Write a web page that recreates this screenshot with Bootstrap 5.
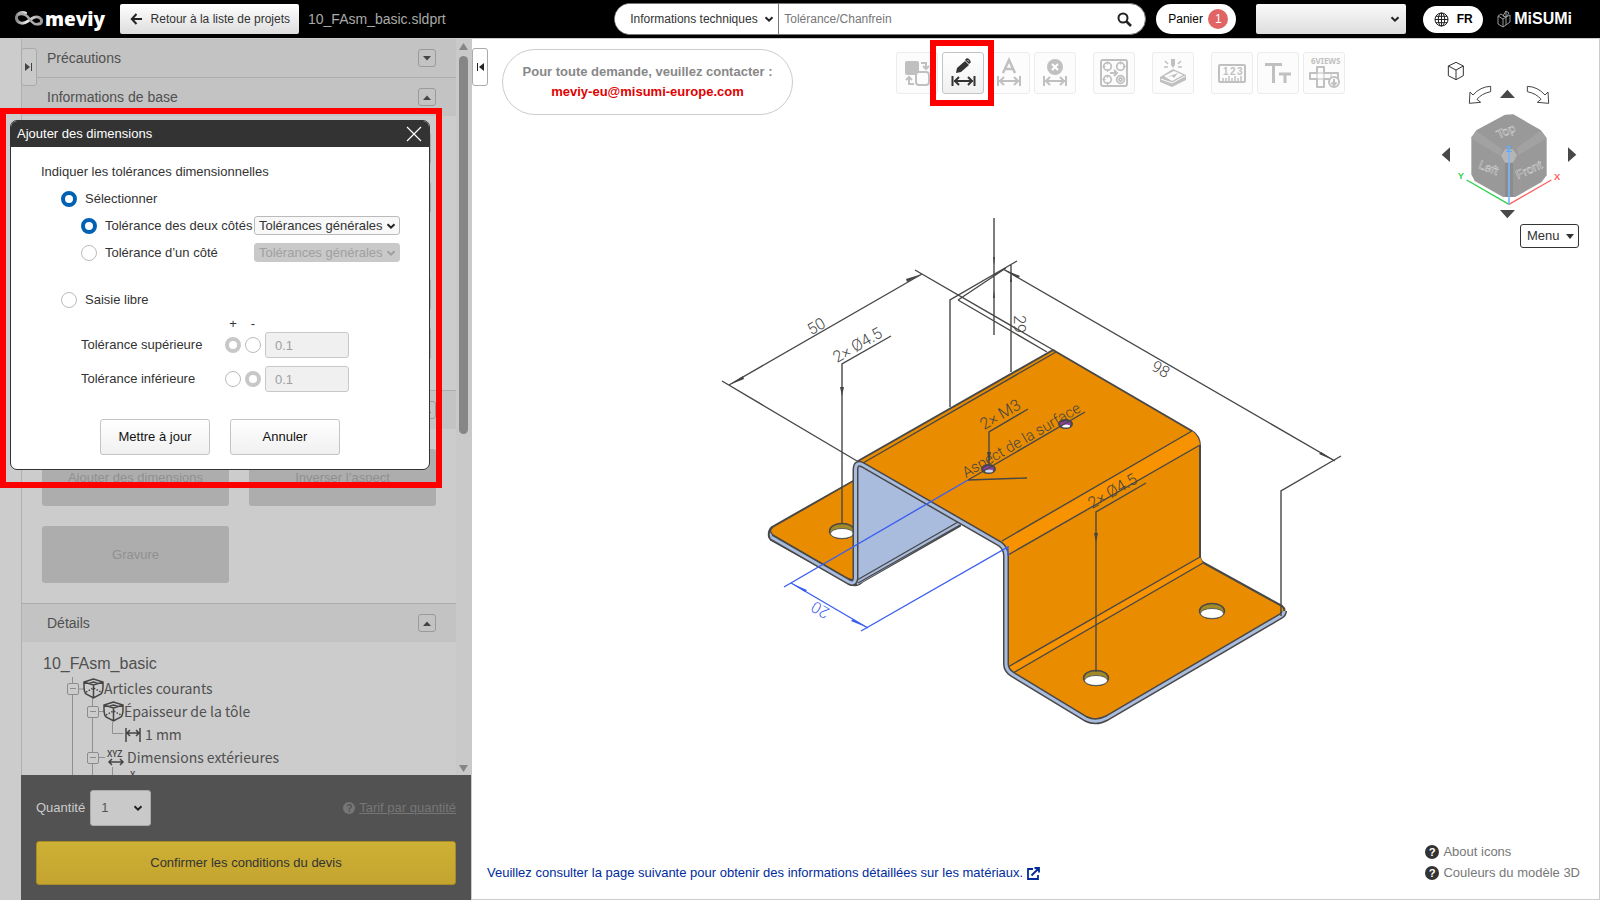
<!DOCTYPE html>
<html lang="fr">
<head>
<meta charset="utf-8">
<meta name="viewport" content="width=device-width, initial-scale=1">
<title>meviy – 10_FAsm_basic.sldprt</title>
<link href="https://cdn.jsdelivr.net/npm/bootstrap@5.3.0/dist/css/bootstrap.min.css" rel="stylesheet">
<style>
:root{--chev:url("data:image/svg+xml,%3Csvg xmlns='http://www.w3.org/2000/svg' viewBox='0 0 10 10'%3E%3Cpath d='M1.5 3.2 5 6.6 8.5 3.2' fill='none' stroke='%23222' stroke-width='2'/%3E%3C/svg%3E");
--chev-off:url("data:image/svg+xml,%3Csvg xmlns='http://www.w3.org/2000/svg' viewBox='0 0 10 10'%3E%3Cpath d='M1.5 3.2 5 6.6 8.5 3.2' fill='none' stroke='%23a0a0a0' stroke-width='2'/%3E%3C/svg%3E")}
body{font-family:"Liberation Sans",Arial,sans-serif;font-size:13px;line-height:20px;color:#333}
svg{display:block;flex:none}
.form-select,.form-control{font-size:13px;line-height:16px;min-height:0;border-radius:3px;color:#333}
.form-select{background-image:var(--chev);background-size:10px 10px}
.topbar{height:39px;background:#000;border-bottom:1px solid #ccc;padding:0 28px 0 15px;font-size:12px}
.brand{font:800 19px/26px "Open Sans",sans-serif;color:#fff;text-decoration:none;width:90px;gap:1px}
.grad{background-color:#eee;background-image:linear-gradient(#fff,#ddd)}
.back{height:30px;width:179px;font-size:12px;border-radius:2px;padding:0 9px 0 10px;color:#333;border:0;margin-left:15px}
.fname{font-size:14px;color:#aaa;margin-left:9px}
.search{width:532px;height:32px;border-radius:16px;background:#fff;border:1px solid #777;overflow:hidden}
.search .form-select{width:164px;height:30px;border:0;border-right:1px solid #777;border-radius:0;background-color:#fff;font-size:12px;padding:0 20px 0 15px;background-position:right 4px center}
.search .form-control{border:0;font-size:12px;padding:0 5px;height:30px;box-shadow:none}
.search .form-control::placeholder{color:#777}
.cart{height:30px;width:80px;border-radius:15px;background:#fff;border:0;color:#000;font-size:12px;margin-left:10px}
.cart .count{width:20px;height:20px;border-radius:50%;background:#e06464;color:#fff}
.acct{width:150px;height:30px;border:0;border-radius:2px;background-image:var(--chev),linear-gradient(#fafafa,#ddd);background-size:10px 10px,100% 100%;background-position:right 6px center,0 0;background-repeat:no-repeat;margin-left:20px}
.lang{width:60px;height:27px;border-radius:14px;background:#fff;border:0;font-weight:700;color:#000;margin-left:17px}
.misumi{font:700 16px/24px "Liberation Sans",sans-serif;color:#fff;text-decoration:none;margin-left:14px;gap:3px}
.side{width:472px;background:#ccc;padding-left:21px}
.scroller{border-left:1px solid #b0b0b0}
.sec-head{height:39px;border-top:1px solid #acacac;background:#c3c3c3;padding:0 20px 0 25px;font-size:14px;color:#505050}
.sec-head:first-child{height:38px;border-top:0}
.sec-head button{width:18px;height:18px;border:1px solid #9a9a9a;border-radius:3px;background:transparent}
.info-body{height:274px;padding:16px 25px}
.info-body .form-control{height:33px;background:#c8c8c8;border-color:#aaa}
.acts{padding:20px;gap:20px;display:grid;grid-template-columns:1fr 1fr}
.acts .btn{height:57px;background:#adadad;border:0;border-radius:3px;color:#909090;font-size:13px;opacity:1}
.tree{padding:11px 20px 0 21px;color:#505050;font:14px/23px "Noto Sans CJK JP",sans-serif}
.tree h2{font:16px/22px "Liberation Sans",sans-serif;margin:0 0 2px}
.tree li{height:23px}
.tree .guides{left:40px;top:35px}
.lv1{padding-left:24px}.lv2{padding-left:44px}.lv3{padding-left:82px}
.tog{width:12px;height:12px;border:1px solid #8c8c8c;border-radius:2px;background:#ccc;color:#8c8c8c;padding:0}
.tog::after{content:"";display:block;width:6px;height:1px;background:#8c8c8c;margin:auto}
.bar{width:16px;background:#c9c9c9;padding:4px 4px 3px 3px}
.thumb{height:378px;width:9px;border-radius:5px;background:#868686;margin-top:6px}
.order{background:#525252;padding:15px 15px;margin-right:1px;height:125px}
.order .form-select{width:61px;height:36px;background-color:#c9c9c9;border-color:#aaa;color:#555;padding:0 10px;margin-left:5px;background-position:right 7px center}
.order .tarif{color:#767676}
.cta{height:44px;background:linear-gradient(#cdb035,#c4a42f);border:1px solid #a88c25;border-radius:3px;color:#333;font-size:13px;margin-top:15px}
.handle{border:1px solid #aaa;border-radius:3px;width:16px;height:38px;background:#c9c9c9;top:9px}
.dlg{left:10px;top:81px;width:420px;height:350px;background:#fff;border:1px solid #333;border-radius:7px;overflow:hidden;z-index:3}
.dlg header{height:26px;background:#333;color:#fff;padding:0 7px 0 6px}
.dlg-main{padding:11px 28px 15px 30px}
.rowline{height:27px}
.dlg input[type=radio]{appearance:none;width:16px;height:16px;border:1px solid #bbb;border-radius:50%;margin:0;background:#fff;flex:none}
.dlg input[type=radio]:checked{border:4px solid #0060b4}
.dlg input[type=radio]:disabled:checked{border-color:#c8c8c8}
.ind1{padding-left:20px;gap:8px}.ind2{padding-left:40px;gap:8px}
.dlg .form-select{width:146px;height:19px;padding:0 12px 0 4px;border-color:#bbb;background-position:right 3px center;background-color:#f8f8f8;flex:none}
.dlg .form-select:disabled{background-color:#c9c9c9;background-image:var(--chev-off);border-color:#c9c9c9;color:#a0a0a0}
.dlg .pos{width:141px}
.free{padding-left:40px}
.free label{width:140px}
.free .form-control{width:84px;height:26px;padding:0 9px;background:#f0f0f0;border-color:#c8c8c8;color:#a0a0a0}
.signs{padding:3px 0 0 144px}
.pm{width:16px;text-align:center;line-height:16px}
.dlg-foot{gap:20px;margin-top:27px;padding-right:2px}
.dlg .btn,.tbtn{background:linear-gradient(#fff,#f0f0f0);border:1px solid #c4c4c4;border-radius:3px}
.dlg .btn{width:110px;height:36px;font-size:13px;padding:0;color:#111}
.frame{border:6px solid red;pointer-events:none;z-index:4}
.frame-dlg{left:0;top:69px;width:442px;height:380px}
.frame-btn{inset:-12px -10px -12px -12px}
.viewer{border-right:1px solid #ccc;border-bottom:1px solid #ccc;background:#fff}
.contact{width:291px;height:66px;border:1px solid #ccc;border-radius:33px;font-weight:700;color:#888;margin-left:30px}
.contact a{color:#e00000;text-decoration:none}
.tools{gap:17px;margin-left:103px;padding-top:3px}
.tbtn{width:42px;height:42px;padding:0;color:#333}
.tbtn:disabled{border-color:#ececec;color:#c0c0c0;background:#fcfcfc}
.nav3d{padding:7px 20px 0 0}
.nav3d svg{margin-right:1px}
.menu3d{width:59px;height:24px;border:1px solid #333;border-radius:3px;background:#fff;color:#333;padding:0 4px 0 6px}
.caret{border:4px solid transparent;border-top:5px solid currentColor;border-bottom:0}
.mat{color:#002c9c;text-decoration:none}
.helps a{color:#777;text-decoration:none}
.ln{fill:none;stroke:#484848;stroke-width:1.4}
</style>
</head>
<body class="vh-100 d-flex flex-column overflow-hidden">
<header class="topbar d-flex align-items-center flex-shrink-0">
  <a href="#" class="brand d-flex align-items-center"><svg width="29" height="16" viewBox="0 0 30 16"><defs><linearGradient id="g"><stop offset="0" stop-color="#888"/><stop offset=".4" stop-color="#eee"/><stop offset="1" stop-color="#999"/></linearGradient></defs><path d="M12 2.500C6-.5 1 3 1.500 7.500S8 14 13 10.500S21 4.500 25 6.500S28 14 23 13" fill="none" stroke="url(#g)" stroke-width="3"/><path d="M3 3.500Q10 1 15 8T24 13" fill="none" stroke="#aaa" stroke-width="2.400"/></svg>meviy</a>
  <button class="back btn grad d-flex align-items-center justify-content-between"><svg width="13" height="12" viewBox="0 0 13 12"><path d="M6.500 1 1.800 6l4.700 5M2 6h10" fill="none" stroke="#222" stroke-width="2"/></svg>Retour à la liste de projets</button>
  <span class="fname">10_FAsm_basic.sldprt</span>
  <form class="search d-flex align-items-center ms-auto">
    <select class="form-select" aria-label="Type de recherche"><option>Informations techniques</option></select>
    <input class="form-control" type="search" placeholder="Tolérance/Chanfrein" aria-label="Recherche">
    <button type="button" class="btn p-0 me-2 pe-1" aria-label="Rechercher"><svg width="15" height="15" viewBox="0 0 15 15"><circle cx="6" cy="6" r="4.500" fill="none" stroke="#222" stroke-width="2"/><path d="m9.500 9.500 4.500 4.500" stroke="#222" stroke-width="2.600"/></svg></button>
  </form>
  <button class="cart d-flex align-items-center justify-content-between px-2"><span class="ps-1">Panier</span><span class="count">1</span></button>
  <select class="form-select acct" aria-label="Compte"><option></option></select>
  <button class="lang d-flex align-items-center justify-content-center gap-2"><svg width="15" height="15" viewBox="0 0 15 15" fill="none" stroke="#222"><circle cx="7.500" cy="7.500" r="6.500"/><ellipse cx="7.500" cy="7.500" rx="3.200" ry="6.500"/><path d="M7.500 1v13M1 7.500h13M2 4.300h11M2 10.700h11"/></svg>FR</button>
  <a href="#" class="misumi d-flex align-items-center"><svg width="14" height="18" viewBox="0 0 14 18" fill="none" stroke="#aaa" stroke-width=".9"><path d="m1 6 5 3v8l-5-3zM6 9l3-2v8l-3 2M6 6l3-5 3 2-3 4zM9 7l4-2v7l-4 3M9 1v6M1 6l3-2 3 2"/></svg>MiSUMi</a>
</header>

<div class="d-flex flex-grow-1 position-relative" style="min-height:0">
  <aside class="side d-flex flex-column flex-shrink-0 position-relative">
    <div class="scroller d-flex flex-grow-1 overflow-hidden">
      <div class="flex-grow-1">
        <div class="sec-head d-flex align-items-center justify-content-between">Précautions<button class="d-flex align-items-center justify-content-center p-0" aria-label="Ouvrir"><svg width="8" height="5"><path d="M0 0h8L4 4.500z" fill="#444"/></svg></button></div>
        <div class="sec-head d-flex align-items-center justify-content-between">Informations de base<button class="d-flex align-items-center justify-content-center p-0" aria-label="Fermer"><svg width="8" height="5"><path d="M0 5h8L4 .5z" fill="#444"/></svg></button></div>
        <div class="info-body d-flex flex-column gap-3">
          <input class="form-control" disabled aria-label="Matière"><input class="form-control" disabled aria-label="Traitement"><input class="form-control mt-5" disabled aria-label="Épaisseur"><input class="form-control" disabled aria-label="Note">
        </div>
        <div class="sec-head d-flex align-items-center justify-content-end"><button class="d-flex align-items-center justify-content-center p-0" aria-label="Fermer"><svg width="8" height="5"><path d="M0 5h8L4 .5z" fill="#444"/></svg></button></div>
        <div class="acts"><button class="btn" disabled>Ajouter des dimensions</button><button class="btn" disabled>Inverser l’aspect</button><button class="btn" disabled>Gravure</button></div>
        <div class="sec-head d-flex align-items-center justify-content-between">Détails<button class="d-flex align-items-center justify-content-center p-0" aria-label="Fermer"><svg width="8" height="5"><path d="M0 5h8L4 .5z" fill="#444"/></svg></button></div>
        <div class="tree position-relative">
          <svg class="guides position-absolute" width="70" height="100" fill="none" stroke="#909090"><path d="M10.500 0v100M30.500 20v80M50.500 45v11.500h11M50.500 90v10M16 12h7M36 34.500h7M36 80.500h7"/></svg>
          <h2>10_FAsm_basic</h2>
          <ul class="list-unstyled m-0 position-relative">
            <li class="d-flex align-items-center lv1"><button class="tog" aria-label="Réduire"></button><svg class="ms-1" width="21" height="21" viewBox="0 0 21 21" fill="none" stroke="#444" stroke-width="1.500"><path d="M10.500 1 1 4v4q0 6 2 8l7.500 4 7.500-4q2-2 2-8V4zM1 4l9.500 3L20 4M10.500 7v13M6 5.500 10.500 4 15 5.500"/><path d="m3 14 7.500-4 7.500 4" stroke-dasharray="1.500 1.500"/></svg>Articles courants</li>
            <li class="d-flex align-items-center lv2"><button class="tog" aria-label="Réduire"></button><svg class="ms-1" width="21" height="21" viewBox="0 0 21 21" fill="none" stroke="#444" stroke-width="1.500"><path d="M10.500 1 1 4v4q0 6 2 8l7.500 4 7.500-4q2-2 2-8V4zM1 4l9.500 3L20 4M10.500 7v13M6 5.500 10.500 4 15 5.500"/><path d="m3 14 7.500-4 7.500 4" stroke-dasharray="1.500 1.500"/></svg>Épaisseur de la tôle</li>
            <li class="d-flex align-items-center lv3"><svg class="me-1" width="16" height="14" viewBox="0 0 16 14" fill="none" stroke="#444" stroke-width="1.500"><path d="M1 0v14M15 0v14M2 5h12M5 2 2 5l3 3M11 2l3 3-3 3"/></svg>1 mm</li>
            <li class="d-flex align-items-center lv2"><button class="tog" aria-label="Réduire"></button><svg class="ms-2" width="20" height="22" viewBox="0 0 20 22"><text x="0" y="10" font-size="9" font-weight="500" fill="#444" font-family="Noto Sans CJK JP">XYZ</text><path d="M1.500 15h15M5 12l-3 3 3 3M13 12l3 3-3 3" fill="none" stroke="#444" stroke-width="1.500"/></svg>Dimensions extérieures</li>
            <li class="lv3"><svg class="ms-1" width="12" height="16"><text x="1" y="9" font-size="9" font-weight="500" fill="#444" font-family="Noto Sans CJK JP">X</text></svg></li>
          </ul>
        </div>
      </div>
      <div class="bar d-flex flex-column flex-shrink-0"><svg width="9" height="7"><path d="M0 7h9L4.500 0z" fill="#868686"/></svg><div class="thumb flex-shrink-0"></div><svg class="mt-auto" width="9" height="7"><path d="M0 0h9L4.500 7z" fill="#868686"/></svg></div>
    </div>
    <div class="order flex-shrink-0">
      <div class="d-flex align-items-center"><label for="qty" style="color:#ccc">Quantité</label><select id="qty" class="form-select"><option>1</option></select>
        <a href="#" class="tarif ms-auto d-flex align-items-center gap-1"><svg width="12" height="12" viewBox="0 0 13 13"><circle cx="6.500" cy="6.500" r="6.500" fill="#767676"/><text x="3.500" y="10.500" font-size="11" font-weight="700" fill="#525252">?</text></svg>Tarif par quantité</a></div>
      <button class="btn cta w-100">Confirmer les conditions du devis</button>
    </div>
    <button class="handle position-absolute d-flex align-items-center justify-content-center p-0" style="left:21px" aria-label="Replier"><svg width="8" height="8"><path d="m0 0 5 4-5 4z" fill="#444"/><path d="M6.500 0v8" stroke="#444"/></svg></button>
  </aside>

  <section class="dlg position-absolute" role="dialog" aria-label="Ajouter des dimensions">
    <header class="d-flex align-items-center justify-content-between">Ajouter des dimensions<button class="btn p-0 border-0 w-auto h-auto" style="background:none" aria-label="Fermer"><svg width="16" height="16"><path d="m1 1 14 14M15 1 1 15" stroke="#fff" stroke-width="1.200"/></svg></button></header>
    <div class="dlg-main">
      <div class="rowline d-flex align-items-center">Indiquer les tolérances dimensionnelles</div>
      <div class="rowline d-flex align-items-center ind1"><input type="radio" name="mode" id="m1" checked><label for="m1">Sélectionner</label></div>
      <div class="rowline d-flex align-items-center ind2"><input type="radio" name="tol" id="t1" checked><label for="t1" class="text-nowrap pos">Tolérance des deux côtés</label><select class="form-select" aria-label="Deux côtés"><option>Tolérances générales</option></select></div>
      <div class="rowline d-flex align-items-center ind2"><input type="radio" name="tol" id="t2"><label for="t2" class="text-nowrap pos">Tolérance d’un côté</label><select class="form-select" disabled aria-label="Un côté"><option>Tolérances générales</option></select></div>
      <div class="rowline d-flex align-items-center ind1" style="margin-top:20px"><input type="radio" name="mode" id="m2"><label for="m2">Saisie libre</label></div>
      <div class="free">
        <div class="signs d-flex gap-1"><span class="pm">+</span><span class="pm">-</span></div>
        <div class="d-flex align-items-center gap-1 mb-2"><label for="up" class="flex-shrink-0">Tolérance supérieure</label><input type="radio" name="s" disabled checked aria-label="plus"><input type="radio" name="s" disabled aria-label="moins"><input id="up" class="form-control" value="0.1" disabled></div>
        <div class="d-flex align-items-center gap-1"><label for="lo" class="flex-shrink-0">Tolérance inférieure</label><input type="radio" name="i" disabled aria-label="plus"><input type="radio" name="i" disabled checked aria-label="moins"><input id="lo" class="form-control" value="0.1" disabled></div>
      </div>
      <div class="dlg-foot d-flex justify-content-center"><button class="btn">Mettre à jour</button><button class="btn">Annuler</button></div>
    </div>
  </section>
  <div class="frame frame-dlg position-absolute"></div>

  <main class="viewer flex-grow-1 position-relative d-flex flex-column">
    <svg class="position-absolute w-100 h-100" viewBox="472 39 1127 860" font-family="Roboto,sans-serif" font-weight="300" font-size="16" fill="#444">
      <g stroke-linejoin="round">
        <!-- left flange -->
        <path d="M855 480 772 527Q768 530 769 537L771 540 850 584Q857 587 862 582L960 526V500z" fill="#a9bcdd" stroke="#484848" stroke-width="2"/>
        <path d="M855 480 773 527Q768 531 773 535L847 578Q855 582 855 576z" fill="#ea8c00" stroke="#484848" stroke-width="1.400"/>
        <ellipse cx="842" cy="531" rx="12.500" ry="7.500" fill="#a08a28" stroke="#484848" stroke-width="1.400"/><ellipse cx="842" cy="533.500" rx="11.500" ry="5" fill="#fff" stroke="#484848" stroke-width=".8"/>
        <path d="M857 463 962 524 857 585z" fill="#a9bcdd"/>
        <path class="ln" d="M858 579.500 958 522M858 583 960 525"/>
        <!-- bent sheet -->
        <path d="M858 461 1053 350 1192 431Q1200 436 1200 446V556Q1200 561 1204 563L1282 606Q1287 610 1282 614L1107 717Q1096 722 1086 717L1012 673Q1007 668 1007 662V555Q1007 547 1000 542Z" fill="#ea8c00" stroke="#484848" stroke-width="2"/>
        <path d="M1002 541 1192 431Q1199 436 1200 445L1008 555Q1007 546 1002 541M1008 667 1200 557 1203 563 1013 673z" fill="#f79200"/>
        <path class="ln" d="M1002 541 1192 431M1008 555 1200 445M1008 667 1200 557M1013 673 1203 563M863 463 1056 352"/>
        <path d="M771 537 849 582Q855 585 855.500 578V470Q855.500 461 863 465L1000 544Q1006 548 1006 556V664Q1006 670 1012 674L1086 719Q1096 724 1107 718L1281 616Q1284 614 1284 611" fill="none" stroke="#484848" stroke-width="6"/>
        <path d="M771 537 849 582Q855 585 855.500 578V470Q855.500 461 863 465L1000 544Q1006 548 1006 556V664Q1006 670 1012 674L1086 719Q1096 724 1107 718L1281 616Q1284 614 1284 611" fill="none" stroke="#a9bcdd" stroke-width="3"/>
        <g stroke="#484848" stroke-width="1.400"><ellipse cx="1212" cy="611" rx="12.500" ry="7.500" fill="#a08a28"/><ellipse cx="1096" cy="678" rx="12.500" ry="7.500" fill="#a08a28"/>
        <ellipse cx="1212" cy="613.500" rx="11.500" ry="5" fill="#fff" stroke-width=".8"/><ellipse cx="1096" cy="680.500" rx="11.500" ry="5" fill="#fff" stroke-width=".8"/></g>
        <g fill="#9040a0" stroke="#484848" stroke-width="2"><ellipse cx="988.500" cy="469" rx="6.500" ry="4"/><ellipse cx="1065.500" cy="424" rx="6.500" ry="4"/></g>
        <ellipse cx="989" cy="471" rx="4" ry="1.500" fill="#ccd8f0"/><ellipse cx="1066" cy="426" rx="4" ry="1.500" fill="#fff"/>
      </g>
      <!-- dimension lines -->
      <path class="ln" d="M729 385 922 274M722 381 857 461M915 270 1055 351M958 300 1047 352M891 336 842 364V524M950 407V300L1017 261M958 300 1006 268M1011 264V372M994 218V335M1003 269 1335 461M1341 456 1281 491V616M1028 409 989 432V465M1085 412 968 480 1027 478M1146 483 1096 512V672"/>
      <path d="m729 385 15-6-1-3zM922 274l-16 5 1 3zM842 396l-2-9h4zM994 265l-1-8h2zM994 290l-1 8h2zM1011 272l-1 10h2zM1003 269l17 7-2 2zM1335 461l-16-7 2-2zM989 462l-2-10h4zM1096 542l-2-9h4z"/>
      <path d="M968 480 784 587M791 583 868 628M861 631 1008 547V556" fill="none" stroke="#3c5ff0" stroke-width="1.400"/>
      <path d="m791 583 16 7-2 2zM868 628l-17-7 2-2z" fill="#3c5ff0"/>
      <g text-anchor="middle">
        <text transform="translate(819 331) rotate(-30)">50</text>
        <text transform="translate(1158 374) rotate(30)">98</text>
        <text transform="translate(1014 324) rotate(90)">29</text>
        <text transform="translate(823 605) rotate(210)" fill="#3c5ff0">20</text>
      </g>
      <text transform="translate(837 363) rotate(-30)">2× Ø4.5</text>
      <text transform="translate(1092 509) rotate(-30)">2× Ø4.5</text>
      <text transform="translate(984 430) rotate(-30)">2× M3</text>
      <text transform="translate(966 478) rotate(-30)" font-size="15">Aspect de la surface</text>
    </svg>

    <button class="handle position-absolute bg-white d-flex align-items-center justify-content-center p-0" style="left:0" aria-label="Replier"><svg width="8" height="8"><path d="M8 0 3 4l5 4z" fill="#222"/><path d="M1.500 0v8" stroke="#222"/></svg></button>

    <div class="d-flex align-items-start position-relative" style="padding-top:10px">
      <div class="contact d-flex flex-column align-items-center justify-content-center flex-shrink-0">Pour toute demande, veuillez contacter :<a href="#">meviy-eu@misumi-europe.com</a></div>
      <div class="tools d-flex">
        <div class="d-flex gap-1">
          <button class="tbtn" disabled aria-label="Remplacer"><svg width="40" height="40" fill="none" stroke="currentColor" stroke-width="2"><rect x="8" y="8" width="14" height="14" rx="2" fill="currentColor" stroke="none"/><rect x="19" y="19" width="13" height="13" rx="3" fill="#fcfcfc"/><path d="M24 10h5v6M26 13l3 3 3-3M17 31h-5v-7M9 27l3-3 3 3"/></svg></button>
          <div class="position-relative"><button class="tbtn d-block" aria-label="Ajouter des dimensions"><svg width="40" height="40" fill="none" stroke="currentColor" stroke-width="2"><path d="m13 20 1-5 8-7 4 4-8 7z" fill="currentColor" stroke="none"/><path d="m23 7 1-1q2 0 3 3l-1 1z" stroke-width="1.500"/><path d="M9.500 23v10M31.500 23v10M11 28h19M16 24l-4 4 4 4M25 24l4 4-4 4"/></svg></button><div class="frame frame-btn position-absolute"></div></div>
          <button class="tbtn" disabled aria-label="Texte de cote"><svg width="40" height="40" fill="none" stroke="currentColor" stroke-width="2"><path d="m14 20 6-13 6 13M16 16h8" stroke-width="2.500"/><path d="M9 23v10M31 23v10M10 28h20M15 24l-4 4 4 4M25 24l4 4-4 4"/></svg></button>
          <button class="tbtn" disabled aria-label="Supprimer la cote"><svg width="40" height="40" fill="none" stroke="currentColor" stroke-width="2"><circle cx="20" cy="14" r="8" fill="currentColor" stroke="none"/><path d="m17 11 6 6M23 11l-6 6" stroke="#fff"/><path d="M9 23v10M31 23v10M10 28h20M15 24l-4 4 4 4M25 24l4 4-4 4"/></svg></button>
        </div>
        <button class="tbtn" disabled aria-label="Trous"><svg width="40" height="40" fill="none" stroke="currentColor" stroke-width="2"><rect x="7" y="7" width="26" height="26" rx="2"/><g stroke-width="1.800"><circle cx="13.500" cy="13.500" r="3.800"/><circle cx="26.500" cy="13.500" r="3.800"/><circle cx="13.500" cy="26.500" r="3.800"/><circle cx="26.500" cy="26.500" r="3.800"/><circle cx="26.500" cy="26.500" r="1.500"/></g><path d="M13.500 8.500v3M13.500 16v3M8.500 13.500h3M26.500 8.500v3M29 13.500h3M13.500 22v3M13.500 29v3M8.500 26.500h3" stroke-width="1"/><path d="M16 20h7M20 17l3 3-3 3"/></svg></button>
        <button class="tbtn" disabled aria-label="Gravure"><svg width="40" height="40" fill="currentColor"><path d="m7 24 13-8 13 6v5l-14 7-12-5z"/><path d="m11 23 10-5 9 4-11 6z" fill="#fcfcfc"/><path d="m14 24 11-4-4 5-2-2z"/><path d="m8 26 11 4 13-7" stroke="#fcfcfc" fill="none"/><path d="M18 6h4v6l-2 3-2-3z"/><path d="m12 8 3 3M28 8l-3 3M11 14h4M25 14h4" stroke="currentColor" stroke-width="1.500"/></svg></button>
        <div class="d-flex gap-1">
          <button class="tbtn" disabled aria-label="Mesure"><svg width="40" height="40" fill="none" stroke="currentColor" stroke-width="2"><rect x="7" y="12" width="26" height="17" rx="1"/><path d="M11 28v-3M14 28v-3M17 28v-5M20 28v-3M23 28v-5M26 28v-3M29 28v-5" stroke-width="1.500"/><g font-size="10" font-weight="700" fill="currentColor" stroke="none"><text x="11" y="22">1</text><text x="18" y="22">2</text><text x="25" y="22">3</text></g></svg></button>
          <button class="tbtn" disabled aria-label="Texte"><svg width="40" height="40" fill="none" stroke="currentColor" stroke-width="3"><path d="M7 11.500h17M15.500 12v18M21 21h12M27 21v9"/></svg></button>
          <button class="tbtn" disabled aria-label="Six vues"><svg width="40" height="40" fill="none" stroke="currentColor" stroke-width="2"><text x="7" y="10.500" font-size="8" font-weight="700" fill="currentColor" stroke="none" font-family="Noto Sans">6VIEWS</text><path d="M13 14h7v6h14v6H20v8h-7v-8H6v-6h7z" stroke-linejoin="round"/><path d="M13 20h7v6h-7zM27 20v6" stroke-width="1"/><circle cx="30" cy="29" r="5" fill="#fcfcfc"/><path d="M30 26v6M27.500 29.500 30 32l2.500-2.500"/></svg></button>
        </div>
      </div>
      <div class="nav3d ms-auto d-flex flex-column align-items-end">
        <svg width="140" height="168" viewBox="114 48 420 504" fill="none">
          <path d="m168 67 22 11v29l-22 12-23-12V78zM145 78l23 12 22-12M168 90v29" stroke="#333" stroke-width="3"/>
          <g stroke="#444" stroke-width="3"><path d="M272 139v16q-28 6-41 23l11 9-34 3 2-34 9 9q22-25 53-26zM382 139v16q28 6 41 23l-11 9 34 3-2-34-9 9q-22-25-53-26z"/></g>
          <path d="m300 174 22-25 23 25zM300 510l22 25 23-25zM150 322v44l-25-22zM504 322v44l25-22z" fill="#484848"/>
          <path d="m315 224 25-1 82 47 18 24v112l-15 20-79 45h-37l-85-48-10-20V292l16-22z" fill="#999"/>
          <path d="m228 272 78 55-6 20-85-50zM422 272l-72 52 4 22 85-50z" fill="#a2a2a2"/><path d="M315 365h24v106h-24z" fill="#8c8c8c"/>
          <path d="m303 346 12-18h24l12 18-12 22h-24z" fill="#b5b5b5"/>
          <g font-family="Liberation Sans,sans-serif" font-size="36" fill="#777" stroke="#ddd" stroke-width="1.500"><text transform="translate(296 297) rotate(-25)">Top</text><text transform="translate(233 383) rotate(22)">Left</text><text transform="translate(354 418) rotate(-25)">Front</text></g>
          <path d="m200 420 127 73" stroke="#30d050" stroke-width="4"/><path d="m327 493 127-73" stroke="#ff6060" stroke-width="4"/><path d="M327 320v173" stroke="#78b8f8" stroke-width="5"/>
          <g font-family="Liberation Sans,sans-serif" font-size="28" font-weight="700"><text x="173" y="418" fill="#30d050">Y</text><text x="462" y="420" fill="#ff6060">X</text><text x="318" y="335" fill="#60a8f8">Z</text></g>
        </svg>
        <button class="menu3d d-flex align-items-center justify-content-between">Menu<span class="caret"></span></button>
      </div>
    </div>
    <div class="mt-auto d-flex justify-content-between align-items-end position-relative" style="padding:0 19px 16px 15px">
      <a href="#" class="mat d-flex align-items-center gap-1">Veuillez consulter la page suivante pour obtenir des informations détaillées sur les matériaux.<svg width="13" height="13" fill="none" stroke="#002c9c" stroke-width="1.800"><path d="M6 2H1v10h10V8M4.500 8.500 11.500 1.500M7.500 1H12v4.500"/></svg></a>
      <div class="helps d-flex flex-column" style="gap:1px">
        <a href="#" class="d-flex align-items-center"><svg width="14" height="14" viewBox="0 0 15 15" class="me-1"><circle cx="7.500" cy="7.500" r="7.500" fill="#333"/><text x="4" y="12" font-size="12" font-weight="700" fill="#fff">?</text></svg>About icons</a>
        <a href="#" class="d-flex align-items-center"><svg width="14" height="14" viewBox="0 0 15 15" class="me-1"><circle cx="7.500" cy="7.500" r="7.500" fill="#333"/><text x="4" y="12" font-size="12" font-weight="700" fill="#fff">?</text></svg>Couleurs du modèle 3D</a>
      </div>
    </div>
  </main>
</div>
<script src="https://cdn.jsdelivr.net/npm/bootstrap@5.3.0/dist/js/bootstrap.bundle.min.js"></script>
</body>
</html>
